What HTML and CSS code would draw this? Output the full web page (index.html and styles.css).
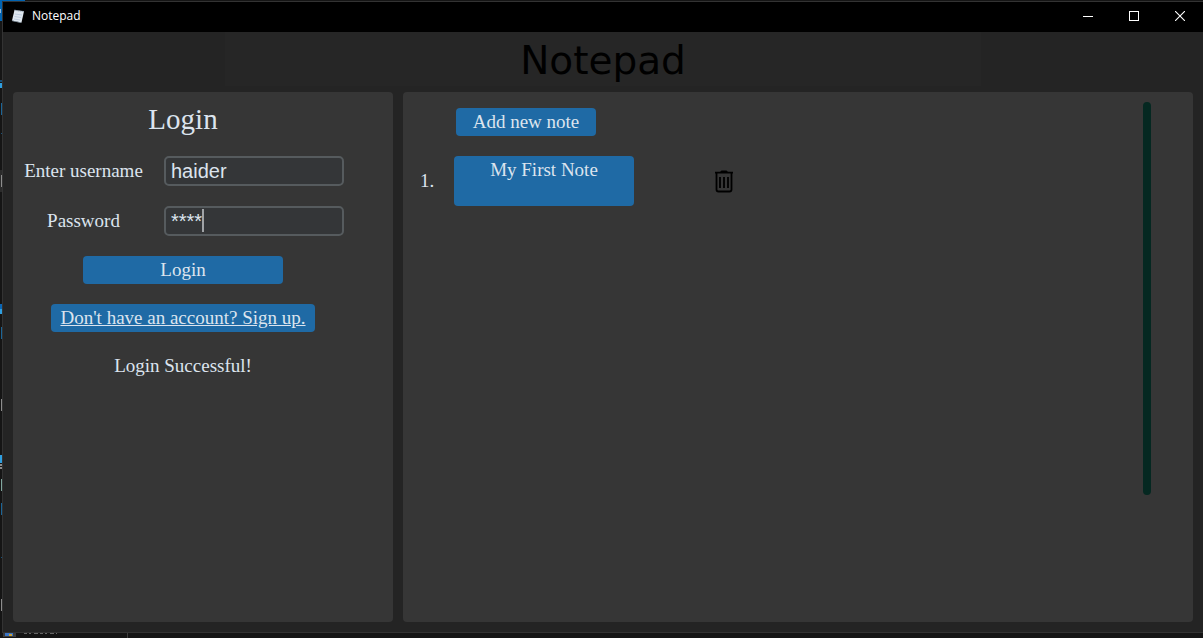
FILE: index.html
```html
<!DOCTYPE html>
<html lang="en">
<head>
<meta charset="utf-8">
<title>Notepad</title>
<link rel="stylesheet" href="styles.css">
</head>
<body>
<svg class="desktop" width="160" height="638" aria-hidden="true" shape-rendering="crispEdges">
  <path fill="#0063b1" d="M0 0h25v21H0z"/>
  <path fill="#8fb6d8" d="M0 9h1v4H0z"/>
  <path fill="#2b2b2b" d="M0 170h2v22H0z"/>
  <path fill="#17517b" d="M0 80h3v2H0zM1 133h2v1H1zM1 557h2v1H1z"/>
  <path fill="#1b6597" d="M1 103h2v12H1zM1 327h2v12H1zM1 503h2v12H1z"/>
  <path fill="#2f9fe0" d="M0 83h3v5H0zM0 309h3v5H0zM0 455h3v8H0z"/>
  <path fill="#0a66b5" d="M0 304h3v5H0z"/>
  <path fill="#8d8d8d" d="M1 175h2v12H1zM1 399h2v12H1zM0 464h3v2H0zM0 467h3v2H0zM1 599h2v12H1z"/>
  <path fill="#7fa69e" d="M1 479h2v12H1z"/>
  <path fill="#3c3c3c" d="M3 632h13v5H3zM127 632h1v6h-1z"/>
  <path fill="#3b74c4" d="M5 632h8v4H5z"/>
  <path fill="#c9a23a" d="M9 634h3v2H9z"/>
  <path stroke="#666" stroke-dasharray="3 2 2 3 4 2" d="M24 633.5h33"/>
</svg>
<div class="window">
  <header class="titlebar">
    <svg class="app-icon" width="14" height="16" viewBox="0 0 14 16" aria-hidden="true">
      <path fill="#dfe7ef" d="M3.5 2 13 3.2 10.5 14.5 1 12.5z"/>
      <path fill="#a9bccd" d="M1 12.5 10.5 14.5 10.2 15 .8 13z"/>
      <path stroke="#8798a9" stroke-width="1.2" stroke-dasharray="1 1" d="M3.5 2.2 13 3.6"/>
      <path stroke="#b5c7dc" stroke-width=".8" d="m4 6 7 1M3.5 8.5l6.5 1M3 11l6 1"/>
    </svg>
    <span class="title">Notepad</span>
    <div class="controls">
      <button type="button" class="control" aria-label="Minimize"><svg width="10" height="10" shape-rendering="crispEdges"><path fill="#fff" d="M0 5h10v1H0z"/></svg></button>
      <button type="button" class="control" aria-label="Maximize"><svg width="10" height="10" shape-rendering="crispEdges"><path fill="none" stroke="#fff" d="M.5.5h9v9h-9z"/></svg></button>
      <button type="button" class="control" aria-label="Close"><svg width="10" height="10"><path stroke="#fff" stroke-width="1.1" d="m0 0 10 10M10 0 0 10"/></svg></button>
    </div>
  </header>
  <h1 class="heading">Notepad</h1>
  <main class="panels">
    <form class="panel login">
      <h2 class="login-heading">Login</h2>
      <label class="label" for="username">Enter username</label>
      <div class="field"><input class="entry" id="username" type="text" value="haider"></div>
      <label class="label" for="password">Password</label>
      <div class="field"><input class="entry" id="password" type="text" value="****" autocomplete="off"><span class="caret"></span></div>
      <button type="button" class="button submit">Login</button>
      <button type="button" class="button signup">Don't have an account? Sign up.</button>
      <p class="status">Login Successful!</p>
    </form>
    <section class="panel notes">
      <div class="notes-body">
        <button type="button" class="button add">Add new note</button>
        <div class="note">
          <span class="number">1.</span>
          <button type="button" class="button note-name">My First Note</button>
          <button type="button" class="delete" aria-label="Delete note">
            <svg width="20" height="24" viewBox="0 0 20 24"><path fill="none" stroke="#000" stroke-width="1.8" stroke-linejoin="round" d="M1 3.6h18M2.5 4V20.5q0 2 2 2h11q2 0 2-2V4"/><path d="M6 3l1.5-1.5h5L14 3z"/><path stroke="#000" stroke-width="1.8" d="M6 8v11M10 8v11M14 8v11"/></svg>
          </button>
        </div>
      </div>
      <div class="scrollbar"></div>
    </section>
  </main>
</div>
</body>
</html>
```
FILE: styles.css
```css
* {
  box-sizing: border-box;
}

body {
  margin: 0;
  height: 100vh;
  padding: 1px 0 5px 2px;
  background: #151515;
  color: #dce4ee;
  font: 19px/28px "Liberation Serif", serif;
  overflow: hidden;
}

button,
input {
  margin: 0;
  padding: 0;
  border: 0;
  color: inherit;
  font: inherit;
}

.desktop {
  position: absolute;
  top: 0;
  left: 0;
}

.window {
  position: relative;
  display: flex;
  flex-direction: column;
  height: 100%;
  border: 1px solid #333;
  border-right: 0;
  background: #242424;
}

.titlebar {
  display: flex;
  align-items: center;
  height: 30px;
  padding: 0 0 2px 8px;
  background: #000;
  color: #fff;
  font: 12px/16px "Open Sans", sans-serif;
}

.title {
  margin-left: 7px;
}

.controls {
  display: flex;
  margin-left: auto;
}

.control {
  display: flex;
  align-items: center;
  justify-content: center;
  width: 46px;
  height: 28px;
  background: none;
}

.heading {
  align-self: center;
  width: 63%;
  height: 54px;
  margin: 0 0 6px;
  background: #262626;
  color: #000;
  font: 39px/58px "DejaVu Sans", sans-serif;
  text-align: center;
}

.panels {
  display: grid;
  flex: 1;
  grid-template-columns: 380px 1fr;
  gap: 10px;
  padding: 0 10px 10px;
}

.panel {
  border-radius: 4px;
  background: #363636;
}

.login {
  display: grid;
  grid-template-columns: 141px 199px;
  align-content: start;
  justify-items: center;
  row-gap: 20px;
  padding-top: 10px;
}

.login-heading {
  grid-column: span 2;
  margin: 0;
  font-size: 29px;
  font-weight: 400;
  line-height: 34px;
}

.label {
  line-height: 30px;
}

.field {
  position: relative;
  justify-self: start;
  height: 30px;
  margin-left: 10px;
}

.entry {
  display: block;
  width: 180px;
  height: 30px;
  padding: 0 5px;
  border: 2px solid #565b5e;
  border-radius: 5px;
  background: #343638;
  font: 20px/26px "Liberation Sans", sans-serif;
  outline: 0;
}

.caret {
  position: absolute;
  top: 3px;
  left: 38px;
  width: 2px;
  height: 23px;
  background: #a0a3a6;
}

.button {
  height: 28px;
  border-radius: 4px;
  background: #1f6aa5;
}

.submit {
  grid-column: span 2;
  width: 200px;
}

.signup {
  grid-column: span 2;
  min-width: 264px;
  text-decoration: underline;
}

.status {
  grid-column: span 2;
  margin: 0;
}

.notes {
  display: flex;
  justify-content: space-between;
  padding: 10px 42px 10px 17px;
}

.notes-body {
  padding-top: 6px;
}

.add {
  display: block;
  width: 140px;
  margin-left: 36px;
}

.note {
  display: flex;
  align-items: center;
  margin-top: 20px;
}

.number {
  width: 34px;
}

.note-name {
  display: flex;
  justify-content: center;
  width: 180px;
  height: 50px;
}

.delete {
  display: flex;
  margin-left: 80px;
  background: none;
}

.scrollbar {
  width: 8px;
  height: 77%;
  border-radius: 4px;
  background: #052821;
}
```
